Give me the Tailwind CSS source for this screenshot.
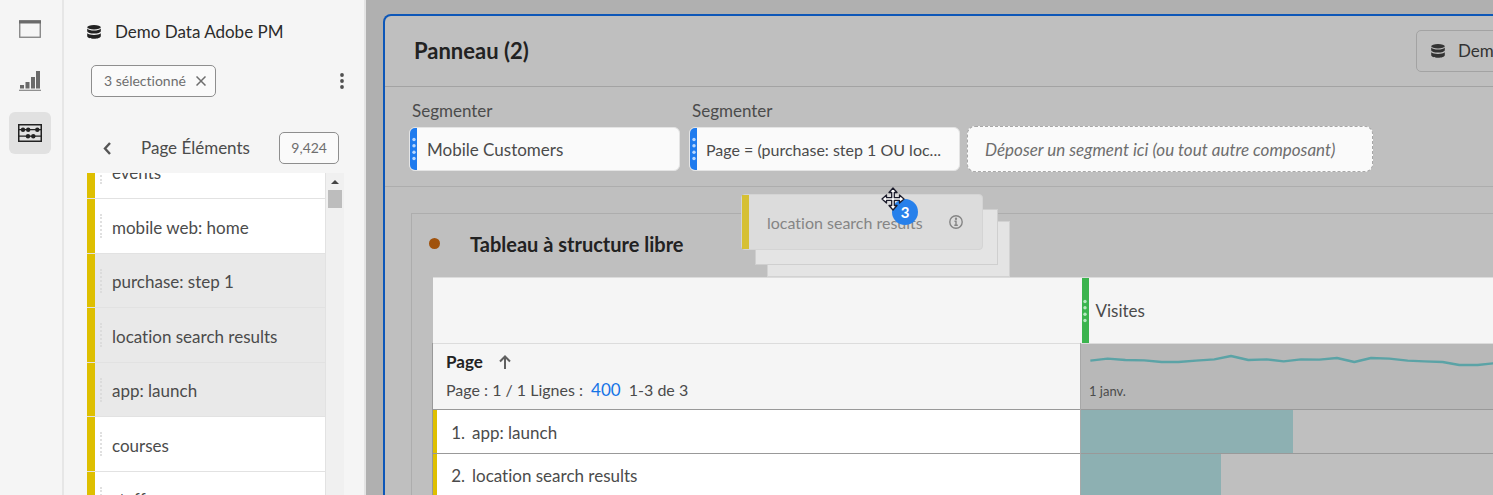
<!DOCTYPE html>
<html lang="fr">
<head>
<meta charset="utf-8">
<title>Panneau (2)</title>
<script src="https://cdn.jsdelivr.net/npm/@tailwindcss/browser@4"></script>
</head>
<body class="relative flex h-screen overflow-hidden bg-[#b0b0b0] font-['Lato','Noto_Sans',sans-serif] text-[17px] leading-6 text-[#4b4b4b] [font-variant-ligatures:none]">
<svg class="hidden" aria-hidden="true">
  <symbol id="db" viewBox="0 0 14 14">
    <ellipse cx="7" cy="2.2" rx="6.8" ry="2.2"/>
    <path d="M.2 3.6C1.5 5.2 4 5.6 7 5.6s5.500-.4 6.800-2v2.600C13.600 7.600 10.600 8.500 7 8.500S.4 7.600.2 6.200z"/>
    <path d="M.2 8.200C1.500 9.500 4 9.900 7 9.900s5.500-.4 6.800-1.700v3C13.600 12.800 10.600 13.700 7 13.700S.4 12.800.2 11.200z"/>
  </symbol>
</svg>

<nav class="flex w-16 shrink-0 flex-col items-center border-r-2 border-[#e6e6e6] bg-[#f5f5f5] pt-2 pr-[2px]" aria-label="Outils">
  <button class="flex size-[42px] items-center justify-center rounded-md" aria-label="Panneaux">
    <svg class="h-[18px] w-[22px]" viewBox="0 0 22 18" fill="none" stroke="#808080"><rect x=".75" y=".75" width="20.500" height="16.500" stroke-width="1.300"/><path d="M0 2h22" stroke="#6a6a6a" stroke-width="3"/></svg>
  </button>
  <button class="mt-[10px] flex size-[42px] items-center justify-center rounded-md" aria-label="Visualisations">
    <svg class="h-[22px] w-[22px]" viewBox="0 0 22 22" fill="#6a6a6a"><rect x="1" y="15" width="4" height="3.500"/><rect x="6.500" y="12" width="4" height="6.500"/><rect x="12" y="7" width="4" height="11.500"/><rect x="17" y="1" width="4" height="17.500"/><rect y="19.700" width="22" height="1.300" fill="#909090"/></svg>
  </button>
  <button class="mt-[10px] flex size-[42px] items-center justify-center rounded-md bg-[#e1e1e1]" aria-label="Composants">
    <svg class="h-[18px] w-6" viewBox="0 0 24 18" fill="#222" stroke="#222"><rect x=".75" y=".75" width="22.500" height="16.500" fill="none" stroke-width="1.500"/><path d="M1 5.700h22M1 12.200h22" stroke-width="1.200"/><g stroke="none"><circle cx="5" cy="5.700" r="2.200"/><circle cx="10.200" cy="5.700" r="2.200"/><circle cx="19.300" cy="5.700" r="2.200"/><circle cx="10" cy="12.200" r="2.200"/><circle cx="15.300" cy="12.200" r="2.200"/></g></svg>
  </button>
</nav>

<aside class="flex w-[302px] shrink-0 flex-col border-r-2 border-[#e4e4e4] bg-[#f5f5f5] pt-5 pr-[20px] pl-[23px]">
  <div class="flex items-center gap-[14px] text-[#2c2c2c]">
    <svg class="size-[14px]" fill="#222"><use href="#db"/></svg>
    <span>Demo Data Adobe PM</span>
  </div>
  <div class="mt-[21px] flex items-center justify-between pl-1">
    <button class="flex h-8 items-center gap-[10px] rounded-[5px] border border-[#8e8e8e] bg-[#fafafa] px-3 pr-[9px] text-sm text-[#6e6e6e]">3 sélectionné
      <svg class="size-[10px]" viewBox="0 0 10 10" stroke="#6e6e6e" stroke-width="1.500"><path d="M.5.5l9 9M9.500.5l-9 9"/></svg>
    </button>
    <button class="w-1" aria-label="Plus d’options"><svg class="h-4 w-1" viewBox="0 0 4 16" fill="#505050"><circle cx="2" cy="2" r="1.900"/><circle cx="2" cy="8" r="1.900"/><circle cx="2" cy="14" r="1.900"/></svg></button>
  </div>
  <div class="mt-[35px] flex items-center pl-4">
    <button class="w-2" aria-label="Retour"><svg class="h-[13px] w-2" viewBox="0 0 8 13" fill="none" stroke="#555" stroke-width="2.400"><path d="M7 1L2 6.500 7 12"/></svg></button>
    <h2 class="ml-[30px]">Page Éléments</h2>
    <span class="mr-[5px] ml-auto flex h-8 items-center rounded-[5px] border border-[#8e8e8e] bg-[#fafafa] px-[11px] text-sm text-[#6e6e6e]">9,424</span>
  </div>
  <div class="mt-[9px] flex min-h-0 flex-1 overflow-hidden">
    <ul class="-mt-7 grid h-max flex-1 auto-rows-[54px_55px] border-r border-[#e2e2e2] bg-white *:flex *:items-center *:gap-[5px] *:border-b *:border-[#e2e2e2]">
      <li><i class="h-full w-2 bg-[#debf00]"></i><i class="h-6 border-l-2 border-dotted border-[#e0e0e0]"></i><span class="pt-[3px] pl-[5px]">events</span></li>
      <li><i class="h-full w-2 bg-[#debf00]"></i><i class="h-6 border-l-2 border-dotted border-[#e0e0e0]"></i><span class="pt-[3px] pl-[5px]">mobile web: home</span></li>
      <li class="bg-[#e9e9e9]"><i class="h-full w-2 bg-[#debf00]"></i><i class="h-6 border-l-2 border-dotted border-[#dcdcdc]"></i><span class="pt-[3px] pl-[5px]">purchase: step 1</span></li>
      <li class="bg-[#e9e9e9]"><i class="h-full w-2 bg-[#debf00]"></i><i class="h-6 border-l-2 border-dotted border-[#dcdcdc]"></i><span class="pt-[3px] pl-[5px]">location search results</span></li>
      <li class="bg-[#e9e9e9]"><i class="h-full w-2 bg-[#debf00]"></i><i class="h-6 border-l-2 border-dotted border-[#dcdcdc]"></i><span class="pt-[3px] pl-[5px]">app: launch</span></li>
      <li><i class="h-full w-2 bg-[#debf00]"></i><i class="h-6 border-l-2 border-dotted border-[#e0e0e0]"></i><span class="pt-[3px] pl-[5px]">courses</span></li>
      <li><i class="h-full w-2 bg-[#debf00]"></i><i class="h-6 border-l-2 border-dotted border-[#e0e0e0]"></i><span class="pt-[3px] pl-[5px]">staff</span></li>
    </ul>
    <div class="flex w-[18px] flex-col items-center bg-[#f0f0f0] pt-[7px]" aria-hidden="true">
      <svg class="h-1 w-2" viewBox="0 0 8 4" fill="#444"><path d="M4 0l4 4H0z"/></svg>
      <i class="mt-[6px] h-[18px] w-[14px] bg-[#bdbdbd]"></i>
    </div>
  </div>
</aside>

<main class="min-w-0 flex-1 overflow-hidden pt-[14px] pl-[17px]">
  <section class="-mr-[140px] h-full rounded-tl-lg border-2 border-b-0 border-[#0d57b8] bg-[#bfbfbf]">
    <header class="flex h-[71px] items-center justify-between border-b border-[#a3a3a3] pl-[29px]">
      <h1 class="text-[22px] font-bold text-[#222]">Panneau (2)</h1>
      <button class="flex h-[42px] w-[215px] items-center gap-[13px] rounded-[5px] border border-[#a3a3a3] pl-[14px] text-[#333]"><svg class="size-[14px]" fill="#333"><use href="#db"/></svg>Demo Data</button>
    </header>
    <div class="flex h-[100px] items-end border-b border-[#adadad] pb-[14px] pl-6">
      <div class="w-[280px] shrink-0 pb-px">
        <div class="pl-[3px]">Segmenter</div>
        <button class="mt-1 flex h-11 w-[271px] items-center overflow-hidden rounded-md border border-[#e4e4e4] bg-[#fafafa] text-left">
          <i class="flex h-full w-[7px] items-center justify-center bg-[#1f7bee]"><svg class="h-6 w-1" viewBox="0 0 4 24" fill="#b9d8ff"><circle cx="2" cy="2.500" r="1.700"/><circle cx="2" cy="8.800" r="1.700"/><circle cx="2" cy="15.200" r="1.700"/><circle cx="2" cy="21.500" r="1.700"/></svg></i>
          <span class="pt-[2px] pl-[10px]">Mobile Customers</span>
        </button>
      </div>
      <div class="w-[278px] shrink-0 pb-px">
        <div class="pl-[3px]">Segmenter</div>
        <button class="mt-1 flex h-11 w-[271px] items-center overflow-hidden rounded-md border border-[#e4e4e4] bg-[#fafafa] text-left">
          <i class="flex h-full w-[7px] items-center justify-center bg-[#1f7bee]"><svg class="h-6 w-1" viewBox="0 0 4 24" fill="#b9d8ff"><circle cx="2" cy="2.500" r="1.700"/><circle cx="2" cy="8.800" r="1.700"/><circle cx="2" cy="15.200" r="1.700"/><circle cx="2" cy="21.500" r="1.700"/></svg></i>
          <span class="pt-[2px] pl-[9px] text-base whitespace-nowrap">Page = (purchase: step 1 OU loc...</span>
        </button>
      </div>
      <div class="flex h-[46px] w-[406px] shrink-0 items-center rounded-lg border border-dashed border-[#a8a8a8] bg-[#fafafa] pt-[2px] pl-[17px] text-[#6e6e6e] italic">Déposer un segment ici (ou tout autre composant)</div>
    </div>
    <div class="mt-[26px] ml-[26px] border border-[#adadad]">
      <div class="flex h-[63px] items-center pb-1 pl-[17px]">
        <i class="size-[11px] rounded-full bg-[#a0520c]"></i>
        <h2 class="ml-[30px] text-[20px] font-bold text-[#222]">Tableau à structure libre</h2>
      </div>
      <table class="ml-5 w-full table-fixed border-collapse text-left">
        <thead>
          <tr class="h-[66px] border-y border-[#dcdcdc] bg-[#f5f5f5]">
            <td class="w-[648px]"></td>
            <th class="p-0 font-normal" scope="col">
              <div class="flex h-[65px] items-center gap-[7px] pl-[1px]">
                <i class="flex h-full w-[7px] items-center justify-center bg-[#3bb44e]"><svg class="h-6 w-1" viewBox="0 0 4 24" fill="#b6eac0"><circle cx="2" cy="2.500" r="1.700"/><circle cx="2" cy="8.800" r="1.700"/><circle cx="2" cy="15.200" r="1.700"/><circle cx="2" cy="21.500" r="1.700"/></svg></i>Visites
              </div>
            </th>
          </tr>
          <tr class="h-[66px] border-b border-[#999]">
            <th class="border-l border-[#999] bg-[#f5f5f5] p-0 pl-[13px] font-normal" scope="col">
              <div class="flex items-center gap-4 font-bold text-[#222]">Page
                <svg class="h-[14px] w-3" viewBox="0 0 12 14" fill="none" stroke="#606060" stroke-width="2"><path d="M6 14V2M1 6.500l5-5 5 5"/></svg>
              </div>
              <div class="pt-[3px] text-base">Page : 1 / 1 Lignes : <a href="#" class="mx-1 text-[17px] text-[#1473e6]">400</a> 1-3 de 3</div>
            </th>
            <td class="border-l border-[#a8a8a8] bg-[#b8b8b8] p-0 align-top">
              <svg class="h-[27px] w-[413px]" viewBox="60 250 1239 81" fill="none" stroke="#5ba3a6" stroke-width="7" stroke-linejoin="round" role="img" aria-label="Tendance des visites"><path d="M88 300L140 294 193 298 250 299 302 304 352 304 405 300 460 296 510 286 562 298 617 296 668 302 720 296 775 297 828 292 880 304 930 292 985 294 1040 300 1090 302 1145 304 1195 313 1250 313 1305 307"/></svg>
              <div class="pt-2 pl-2 text-[13px]">1 janv.</div>
            </td>
          </tr>
        </thead>
        <tbody>
          <tr class="h-[44px] border-b border-[#999]">
            <th class="border-l border-[#999] bg-white p-0 font-normal" scope="row"><div class="flex h-[43px] items-center border-l-4 border-[#debf00]"><span class="w-7 pt-[2px] text-right">1.</span><span class="pt-[2px] pl-[7px]">app: launch</span></div></th>
            <td class="border-l border-[#a8a8a8] p-0"><div class="h-[43px] w-[212px] bg-[#8db0b2]"></div></td>
          </tr>
          <tr class="h-[44px] border-b border-[#999]">
            <th class="border-l border-[#999] bg-white p-0 font-normal" scope="row"><div class="flex h-[43px] items-center border-l-4 border-[#debf00]"><span class="w-7 text-right">2.</span><span class="pl-[7px]">location search results</span></div></th>
            <td class="border-l border-[#a8a8a8] p-0"><div class="h-[43px] w-[140px] bg-[#8db0b2]"></div></td>
          </tr>
        </tbody>
      </table>
    </div>
  </section>
</main>

<!-- Drag preview following the pointer -->
<div class="pointer-events-none absolute top-[194px] left-[741px] h-[83px] w-[269px]">
  <div class="absolute top-[27px] left-[26px] h-[56px] w-[243px] border border-[#d2d2d2] bg-[#e4e4e4]"></div>
  <div class="absolute top-[15px] left-[14px] h-[56px] w-[243px] border border-[#cfcfcf] bg-[#e4e4e4]"></div>
  <div class="absolute top-0 left-0 flex h-[56px] w-[242px] items-center rounded-sm border border-[#d4d4d4] bg-[#dcdcdc] text-base text-[#858585]">
    <i class="h-full w-[7px] bg-[#d6c034]"></i>
    <span class="flex-1 pt-px pl-[18px] whitespace-nowrap">location search results</span>
    <svg class="mr-[19px] size-[14px]" viewBox="0 0 14 14" fill="none" stroke="#858585" stroke-width="1.400"><circle cx="7" cy="7" r="6.200"/><path d="M5.500 6.200H7v4M5.300 10.200h3.500"/><circle cx="7" cy="3.800" r=".5" fill="#858585"/></svg>
  </div>
  <div class="absolute top-[5px] left-[151px] flex size-[26px] items-center justify-center rounded-full bg-[#2680eb] text-[15px] font-bold text-white">3</div>
  <svg class="absolute -top-[7px] left-[140px] size-6" viewBox="0 0 24 24" fill="#fff" stroke="#1c1c2c" stroke-width="1.300" stroke-linejoin="round"><path d="M12 1l4 4.500h-2.700v5.200h5.200V8L23 12l-4.500 4v-2.700h-5.200v5.200H16L12 23l-4-4.500h2.700v-5.200H5.500V16L1 12l4.500-4v2.700h5.200V5.500H8z"/></svg>
</div>
</body>
</html>
